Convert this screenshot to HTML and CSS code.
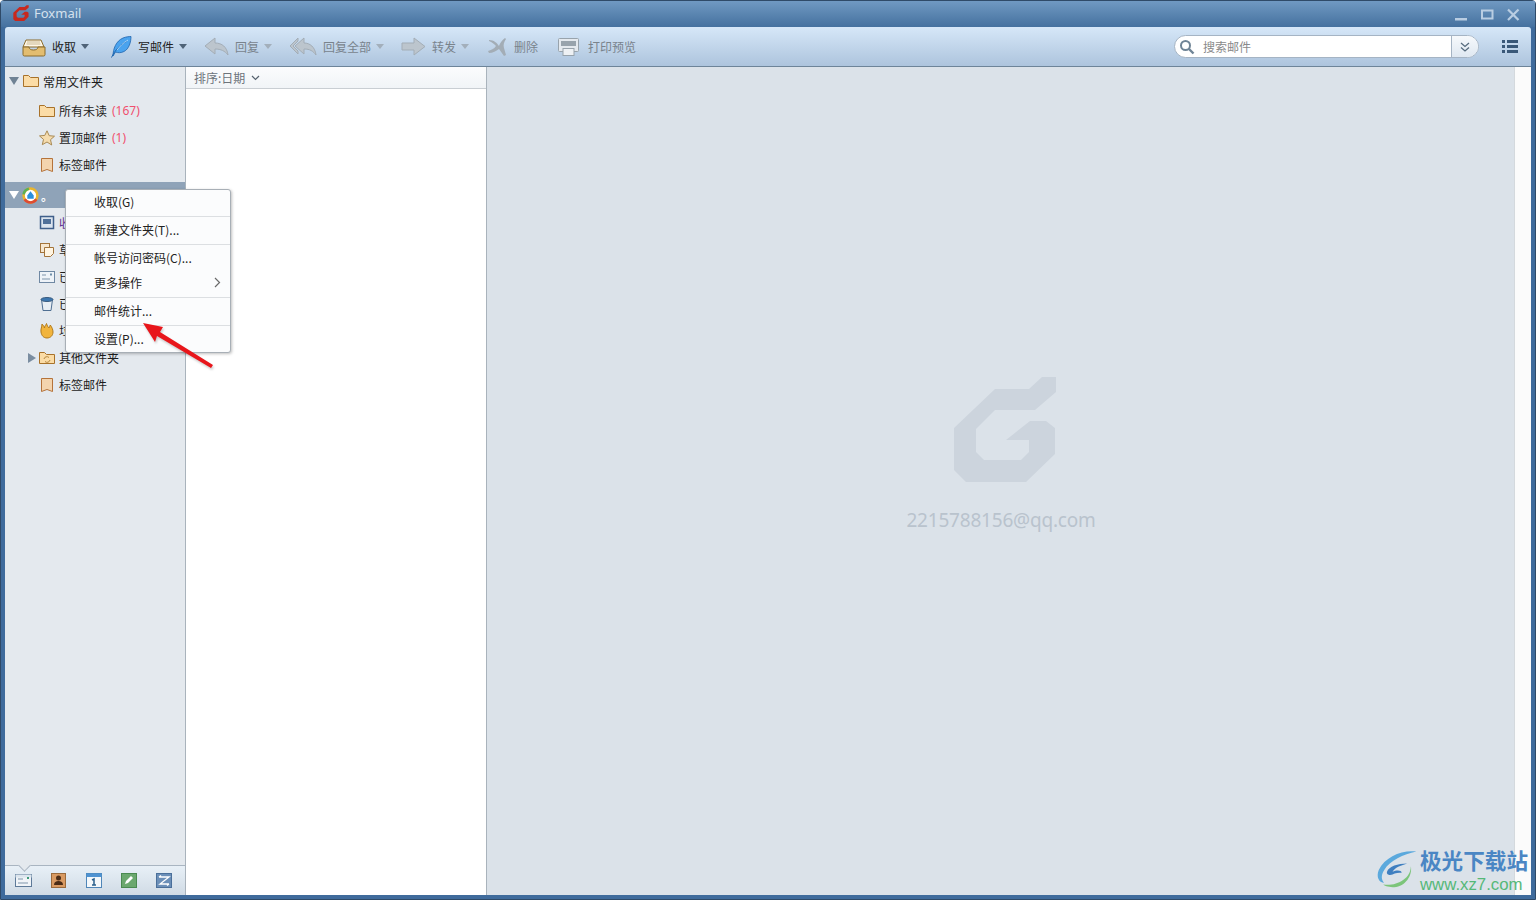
FILE: index.html
```html
<!DOCTYPE html>
<html lang="zh-CN">
<head>
  <meta charset="UTF-8">
  <title>Foxmail</title>
  <link rel="stylesheet" href="styles.css">
</head>
<body>
  <div class="window">
    <div class="titlebar">
      <svg class="app-logo" width="16" height="16" viewBox="0 0 102 106"><use href="#g-mark" fill="#c8281e"/></svg>
      <span class="app-name">Foxmail</span>
      <div class="win-buttons">
        <svg width="14" height="14" viewBox="0 0 14 14"><rect x="1" y="10" width="12" height="2.500" fill="#b9cde2"/></svg>
        <svg width="14" height="14" viewBox="0 0 14 14"><rect x="2" y="2.500" width="10.500" height="8" fill="none" stroke="#b9cde2" stroke-width="2"/></svg>
        <svg width="14" height="14" viewBox="0 0 14 14"><path d="M2 1.500 12.500 12M12.500 1.500 2 12" stroke="#b9cde2" stroke-width="2.200"/></svg>
      </div>
    </div>

    <div class="client">
      <div class="toolbar">
        <div class="tool tool-first">
          <svg width="24" height="20" viewBox="0 0 24 20"><path d="M4 3h15l3 7H1Z" fill="#fff7e6" stroke="#8a6a2a"/><path d="M5 5h13M4.500 7h14" stroke="#c9b994"/><path d="M1 10h6c0 2 2 3 4.500 3S16 12 16 10h7v7.500a1.500 1.500 0 0 1-1.500 1.500h-19A1.500 1.500 0 0 1 1 17.500Z" fill="#e3bd70" stroke="#8a6a2a"/></svg>
          <span class="tool-label">收取</span><i class="caret"></i>
        </div>
        <div class="tool">
          <svg width="22" height="22" viewBox="0 0 22 22"><path d="M3 20C3 13 6 5 13 2c3-1.200 6-1.500 8-1.500C21 6 19 13 14 15.500c-3 1.500-6 1.500-8.500 .5Z" fill="#4aa3ee" stroke="#1f65ad" stroke-width=".8"/><path d="M1.500 21.500C5 14 10 9 17 5" stroke="#1f65ad" fill="none"/><path d="M7 14C10 10 13 7 18 4" stroke="#a8d6fb" fill="none"/></svg>
          <span class="tool-label">写邮件</span><i class="caret"></i>
        </div>
        <div class="tool off">
          <svg width="25" height="20" viewBox="0 0 25 20"><path d="M1 9 11 1v5c7 0 12 4 13 12-3-4-7-6-13-6v5Z" fill="#bcc5cd" stroke="#a3adb6"/></svg>
          <span class="tool-label">回复</span><i class="caret"></i>
        </div>
        <div class="tool off">
          <svg width="28" height="20" viewBox="0 0 28 20"><path d="M1 9 9 1v3L4 9l5 5v3ZM6 9l9-8v5c6 0 11 4 12 12-3-4-6-6-12-6v5Z" fill="#bcc5cd" stroke="#a3adb6"/></svg>
          <span class="tool-label">回复全部</span><i class="caret"></i>
        </div>
        <div class="tool off tool-fwd">
          <svg width="25" height="20" viewBox="0 0 25 20"><path d="M1 6h12V1l11 8.500L13 18v-5H1Z" fill="#bcc5cd" stroke="#a3adb6"/></svg>
          <span class="tool-label">转发</span><i class="caret"></i>
        </div>
        <div class="tool off tool-del">
          <svg width="20" height="20" viewBox="0 0 20 20"><path d="M1 3c5 0 8 3 10 6 1-3 3-6 6-8l1 1c-2 3-3 6-2 9l2 7-2 1-5-7c-3 2-6 4-10 4l-1-2c3-1 6-2 8-5-2-2-4-4-7-5Z" fill="#a3adb6"/></svg>
          <span class="tool-label">删除</span>
        </div>
        <div class="tool off tool-print">
          <svg width="21" height="18" viewBox="0 0 21 18"><rect x=".5" y=".5" width="20" height="13" rx="1" fill="#e4e9ee" stroke="#98a3ac"/><rect x="3" y="3" width="15" height="5" fill="#98a3ac"/><rect x="5" y="10.500" width="11" height="7" fill="#eef1f4" stroke="#98a3ac"/></svg>
          <span class="tool-label">打印预览</span>
        </div>
        <div class="search">
          <svg width="16" height="16" viewBox="0 0 16 16"><circle cx="6.500" cy="6.500" r="4.500" fill="none" stroke="#6f8496" stroke-width="2"/><path d="M10 10l4.500 4.500" stroke="#6f8496" stroke-width="2.400"/></svg>
          <span class="search-text">搜索邮件</span>
          <div class="search-more">
            <svg width="12" height="12" viewBox="0 0 12 12"><path d="M2 2l4 3.500L10 2M2 6.500 6 10l4-3.500" fill="none" stroke="#566b7d" stroke-width="1.300"/></svg>
          </div>
        </div>
        <svg class="list-icon" width="16" height="13" viewBox="0 0 16 13"><path d="M0 0h3v3H0ZM5 0h11v3H5ZM0 5h3v3H0ZM5 5h11v3H5ZM0 10h3v3H0ZM5 10h11v3H5Z" fill="#3a5878"/></svg>
      </div>

      <div class="panes">
        <div class="sidebar">
          <div class="tree">
            <div class="row row-top">
              <i class="tri-down"></i>
              <svg class="icon" width="16" height="14" viewBox="0 0 16 14"><use href="#folder"/></svg>
              <span>常用文件夹</span>
            </div>
            <div class="row row-sub">
              <svg class="icon" width="16" height="14" viewBox="0 0 16 14"><use href="#folder"/></svg>
              <span>所有未读</span><span class="count">(167)</span>
            </div>
            <div class="row row-sub">
              <svg class="icon" width="16" height="16" viewBox="0 0 16 16"><path d="M8 .8l2.200 4.900 5.300 .5-4 3.500 1.200 5.300L8 12l-4.700 2.700 1.200-5.300-4-3.500 5.300-.5Z" fill="#f5dcae" stroke="#a98a54"/></svg>
              <span>置顶邮件</span><span class="count">(1)</span>
            </div>
            <div class="row row-sub">
              <svg class="icon" width="16" height="16" viewBox="0 0 16 16"><use href="#tag"/></svg>
              <span>标签邮件</span>
            </div>
            <div class="row row-account">
              <i class="tri-down tri-white"></i>
              <svg class="icon" width="17" height="17" viewBox="0 0 16 16"><circle cx="8" cy="8" r="6.500" fill="#fff" stroke="#e9b52e" stroke-width="2.400"/><path d="M2.500 11.500a6.500 6.500 0 0 0 11 0" fill="none" stroke="#de4b32" stroke-width="2.400"/><path d="M1.500 7a6.500 6.500 0 0 1 5-5.400" fill="none" stroke="#5cb054" stroke-width="2.400"/><path d="M8 4 11 8v3H5V8Z" fill="#2a8fdc"/></svg>
              <span class="acct-name">。</span>
            </div>
            <div class="row row-sub">
              <svg class="icon" width="16" height="16" viewBox="0 0 16 16"><rect x="1.500" y="1.500" width="13" height="12" fill="#dbe4ee" stroke="#3f5f8a" stroke-width="1.500"/><rect x="4" y="4" width="8" height="5" fill="#4f7099"/></svg>
              <span class="inbox-text">收</span>
            </div>
            <div class="row row-sub">
              <svg class="icon" width="16" height="16" viewBox="0 0 16 16"><rect x="1.500" y="1.500" width="9" height="9" fill="#f6e7cf" stroke="#a3743a"/><path d="M5.500 5.500h9v6l-3 3h-6Z" fill="#fff5e2" stroke="#a3743a"/></svg>
              <span>草</span>
            </div>
            <div class="row row-sub">
              <svg class="icon" width="16" height="14" viewBox="0 0 16 14"><rect x=".5" y="1.500" width="15" height="11" fill="#eef3f8" stroke="#6f88a3"/><path d="M3 9h8M3 5h4" stroke="#7f95ab"/><rect x="11" y="3.500" width="2" height="2" fill="#6f8fa8"/></svg>
              <span>已</span>
            </div>
            <div class="row row-sub">
              <svg class="icon" width="16" height="16" viewBox="0 0 16 16"><path d="M2.500 3.500 4 14.500h8l1.500-11Z" fill="#e8eef4" stroke="#4f6f92"/><ellipse cx="8" cy="3.500" rx="6" ry="2" fill="#3e78b0" stroke="#3c5d80"/></svg>
              <span>已</span>
            </div>
            <div class="row row-sub">
              <svg class="icon" width="16" height="16" viewBox="0 0 16 16"><path d="M2 9C1.500 6 3 4 3 1c1 1 2 2 2.500 4C5.500 3 7 2 7.500 .5c.5 2 1.500 3.500 2.500 4.500 .3-1 1-2 1.300-3 1.500 2 2.700 4.500 2.700 7 0 3.500-2.500 6-6 6S2.500 12.500 2 9Z" fill="#f1b43c" stroke="#b17a1c"/></svg>
              <span>垃</span>
            </div>
            <div class="row row-sub row-other">
              <i class="tri-right"></i>
              <svg class="icon" width="16" height="14" viewBox="0 0 16 14"><use href="#folder"/><path d="M5 8a3 3 0 0 1 5-1.500M11 9a3 3 0 0 1-5 1.500" fill="none" stroke="#b5873f"/></svg>
              <span>其他文件夹</span>
            </div>
            <div class="row row-sub">
              <svg class="icon" width="16" height="16" viewBox="0 0 16 16"><use href="#tag"/></svg>
              <span>标签邮件</span>
            </div>
          </div>
          <div class="dock">
            <svg width="17" height="13" viewBox="0 0 17 13"><rect x=".5" y=".5" width="16" height="12" fill="#f0f4f8" stroke="#5e7a99"/><rect x=".5" y=".5" width="16" height="3" fill="#dce5ee"/><path d="M3 5h5M3 9h10" stroke="#7f95ab"/><rect x="12" y="3" width="2" height="2" fill="#3e9a78"/></svg>
            <svg width="16" height="15" viewBox="0 0 16 15"><rect x=".5" y=".5" width="14" height="14" fill="#d99a62" stroke="#9a6a3c"/><circle cx="7.500" cy="5" r="2.500" fill="#4b2c16"/><path d="M3 12c0-3 2-4 4.500-4S12 9 12 12Z" fill="#4b2c16"/></svg>
            <svg width="16" height="15" viewBox="0 0 16 15"><rect x=".5" y=".5" width="15" height="14" fill="#f4f8fb" stroke="#4f86b8"/><rect x=".5" y=".5" width="15" height="3.500" fill="#4f93d2"/><path d="M6 7l2-1v6M6 12h4" stroke="#2a5f8c" stroke-width="1.500" fill="none"/></svg>
            <svg width="16" height="15" viewBox="0 0 16 15"><rect x=".5" y=".5" width="15" height="14" fill="#6ba86e" stroke="#4a8a50"/><path d="M4 11l1-3 5-5 2 2-5 5Z" fill="#fff"/></svg>
            <svg width="16" height="15" viewBox="0 0 16 15"><rect x=".5" y=".5" width="15" height="14" fill="#6b8fb8" stroke="#4a6f9a"/><path d="M3 4h10L4 11h9M3 4l2-1.500M13 11l-2 1.500" stroke="#fff" fill="none" stroke-width="1.300"/></svg>
          </div>
        </div>

        <div class="list-pane">
          <div class="sort-bar">
            <span>排序:日期</span>
            <svg width="9" height="6" viewBox="0 0 9 6"><path d="M1 1l3.500 3.500L8 1" fill="none" stroke="#56626e" stroke-width="1.200"/></svg>
          </div>
        </div>

        <div class="reading-pane">
          <svg class="big-mark" width="102" height="106" viewBox="0 0 102 106"><use href="#g-mark" fill="#ccd4dd"/></svg>
          <div class="account-mail">2215788156@qq.com</div>
        </div>
        <div class="right-strip"></div>
      </div>
    </div>

    <div class="context-menu">
      <div class="menu-group"><div class="menu-item raise">收取(G)</div></div>
      <div class="menu-group"><div class="menu-item tall">新建文件夹(T)...</div></div>
      <div class="menu-group">
        <div class="menu-item">帐号访问密码(C)...</div>
        <div class="menu-item raise">更多操作
          <svg width="7" height="11" viewBox="0 0 7 11"><path d="M1 1l4.500 4.500L1 10" fill="none" stroke="#6a6a6a" stroke-width="1.200"/></svg>
        </div>
      </div>
      <div class="menu-group"><div class="menu-item tall">邮件统计...</div></div>
      <div class="menu-group"><div class="menu-item">设置(P)...</div></div>
    </div>

    <svg class="red-arrow" width="74" height="48" viewBox="0 0 74 48"><path d="M1 1 21 5 18 10 71 43 69 46 15 14 13 20Z" fill="#e8161b"/></svg>

    <div class="watermark">
      <svg width="44" height="42" viewBox="0 0 48 42"><path d="M44 2C28 0 10 8 3 22c-3 7 0 14 6 14-3-3-4-8 0-14C15 12 30 5 44 2Z" fill="#5ba9dd"/><path d="M12 24c2-6 12-9 22-9-6 2-13 4-16 9 4-2 10-2 10 1-3 0-7 0-10 2-2 1-7 1-6-3Z" fill="#3f7fc0"/><path d="M8 38c14 2 30-6 30-20 2 10-6 22-18 23-5 0-10-1-12-3Z" fill="#7cc57a"/></svg>
      <div class="wm-text">
        <div class="wm-cn">极光下载站</div>
        <div class="wm-url">www.xz7.com</div>
      </div>
    </div>
  </div>

  <svg class="defs" width="0" height="0">
    <defs>
      <path id="g-mark" d="M41 13H75L88 1H102V16L81 34H41L22 53V76L30 84H67L75 76V64H52L76 45H92L101 52V78L72 106H12L0 94V52Z"/>
      <g id="folder"><path d="M.5 12.500V1.500h5l2 2h8v9Z" fill="#fbdca6" stroke="#a8722a"/></g>
      <g id="tag"><path d="M2.500 1.500h11v13l-5.500-2-5.500 2Z" fill="#f3d4ae" stroke="#b5733a"/></g>
    </defs>
  </svg>
</body>
</html>
```

FILE: styles.css
```css
* {
  box-sizing: border-box;
}
html, body {
  margin: 0;
  height: 100%;
  overflow: hidden;
}
body {
  font-family: "Noto Sans CJK SC", "Liberation Sans", sans-serif;
  font-size: 12px;
  color: #1c1c1c;
}
.defs {
  position: absolute;
}
.window {
  position: relative;
  width: 1536px;
  height: 900px;
  display: flex;
  flex-direction: column;
  background: #3f6b9c;
  border: 1px solid #2f4a68;
  border-radius: 4px 4px 0 0;
  padding: 0 4px 4px 3px;
}
.titlebar {
  height: 26px;
  margin: 0 -4px 0 -3px;
  padding: 0 15px 2px 12px;
  display: flex;
  align-items: center;
  background: linear-gradient(#7099c2, #45719f);
}
.app-logo {
  margin-right: 5px;
}
.app-name {
  font-family: "Noto Sans", sans-serif;
  font-size: 13px;
  color: #d5e1ee;
}
.win-buttons {
  margin-left: auto;
  display: flex;
  gap: 12px;
  margin-top: 4px;
}
.client {
  flex: 1;
  min-height: 0;
  display: flex;
  flex-direction: column;
  margin-left: 1px;
}
.toolbar {
  height: 40px;
  padding: 0 13px 0 6px;
  display: flex;
  align-items: center;
  background: linear-gradient(#d6e7f8, #adc4dd);
  border-bottom: 1px solid #6d8499;
  border-radius: 3px 3px 0 0;
}
.tool {
  display: flex;
  align-items: center;
  gap: 6px;
  margin-right: 17px;
}
.tool-first {
  margin-left: 11px;
  margin-right: 21px;
}
.tool-fwd {
  margin-right: 19px;
}
.tool-del {
  margin-right: 20px;
}
.tool-print {
  gap: 9px;
}
.tool-label {
  color: #222;
}
.off .tool-label {
  color: #79838c;
}
.caret {
  width: 0;
  height: 0;
  margin-left: -1px;
  border-left: 4px solid transparent;
  border-right: 4px solid transparent;
  border-top: 5px solid #4f6378;
}
.off .caret {
  border-top-color: #a3afbb;
}
.search {
  margin-left: auto;
  width: 305px;
  height: 23px;
  display: flex;
  align-items: center;
  padding-left: 4px;
  background: #fff;
  border: 1px solid #a5b4c4;
  border-radius: 12px;
  overflow: hidden;
}
.search-text {
  margin-left: 8px;
  color: #8a8a8a;
}
.search-more {
  margin-left: auto;
  width: 27px;
  height: 100%;
  display: flex;
  align-items: center;
  justify-content: center;
  background: linear-gradient(#f6f9fc, #dfe8f1);
  border-left: 1px solid #a5b4c4;
}
.list-icon {
  margin-left: 23px;
}
.panes {
  flex: 1;
  min-height: 0;
  display: flex;
}
.sidebar {
  width: 181px;
  display: flex;
  flex-direction: column;
  background: #e4e9ee;
  border-right: 1px solid #a9b3bc;
}
.tree {
  flex: 1;
}
.row {
  height: 27px;
  display: flex;
  align-items: center;
  white-space: nowrap;
}
.row-top {
  height: 30px;
  padding: 0 0 2px 4px;
}
.row-sub {
  padding-left: 34px;
}
.row-account {
  height: 26px;
  margin-top: 4px;
  margin-bottom: 1px;
  padding-left: 4px;
  background: #8fa3b8;
}
.row-other {
  padding-left: 23px;
}
.icon {
  flex: none;
  margin-right: 4px;
}
.row-top .icon, .row-account .icon {
  margin-left: 3px;
}
.row-top .icon {
  margin-left: 4px;
}
.tri-down {
  flex: none;
  width: 0;
  height: 0;
  border-left: 5px solid transparent;
  border-right: 5px solid transparent;
  border-top: 8px solid #6f8294;
}
.tri-white {
  border-top-color: #fff;
}
.tri-right {
  flex: none;
  width: 0;
  height: 0;
  margin-right: 3px;
  border-top: 5px solid transparent;
  border-bottom: 5px solid transparent;
  border-left: 8px solid #7a8da0;
}
.acct-name {
  color: #fff;
  margin-left: -2px;
  font-weight: 700;
}
.count {
  margin-left: 5px;
  color: #f0506e;
  font-family: "Noto Sans", sans-serif;
}
.inbox-text {
  color: #5a2a8c;
}
.dock {
  height: 30px;
  display: flex;
  align-items: center;
  gap: 19px;
  padding: 0 0 0 10px;
  background: linear-gradient(#e8f0f7, #d0dbe5);
  border-top: 1px solid #a9b5c1;
  position: relative;
}
.dock::before {
  content: "";
  position: absolute;
  left: 15px;
  top: -1px;
  width: 8px;
  height: 8px;
  border-right: 1px solid #a9b5c1;
  border-bottom: 1px solid #a9b5c1;
  background: #e4e9ee;
  transform: translateY(-4px) rotate(45deg);
}
.list-pane {
  width: 301px;
  background: #fff;
  border-right: 1px solid #a9b3bc;
}
.sort-bar {
  height: 22px;
  padding-left: 8px;
  display: flex;
  align-items: center;
  gap: 6px;
  color: #6d747b;
  background: linear-gradient(#fbfcfd, #f1f4f7);
  border-bottom: 1px solid #c9ced3;
}
.reading-pane {
  flex: 1;
  display: flex;
  flex-direction: column;
  align-items: center;
  padding-top: 309px;
  background: #dbe2e9;
}
.big-mark {
  margin-left: 9px;
}
.account-mail {
  margin-top: 25px;
  margin-left: 1px;
  font-family: "Noto Sans", sans-serif;
  font-size: 19px;
  letter-spacing: -0.2px;
  color: #b9c3cd;
}
.right-strip {
  width: 17px;
  background: #fbfbfb;
  border-left: 1px solid #d4d9dd;
}
.context-menu {
  position: absolute;
  left: 64px;
  top: 188px;
  width: 166px;
  background: #fbfcfd;
  border: 1px solid #a8afb6;
  border-radius: 3px;
  box-shadow: 1px 1px 3px rgba(0,0,0,0.25);
}
.menu-group {
  border-bottom: 1px solid #dcdfe2;
}
.menu-group:last-child {
  border-bottom: none;
}
.menu-item {
  height: 26px;
  padding: 0 9px 2px 28px;
  display: flex;
  align-items: center;
  justify-content: space-between;
  color: #222;
}
.raise {
  padding-bottom: 4px;
}
.tall {
  height: 27px;
  padding-bottom: 3px;
}
.red-arrow {
  position: absolute;
  left: 141px;
  top: 321px;
  filter: drop-shadow(1px 2px 1px rgba(0,0,0,0.2));
}
.watermark {
  position: absolute;
  left: 1375px;
  top: 847px;
  display: flex;
}
.wm-cn {
  font-size: 21.600px;
  font-weight: 700;
  line-height: 24px;
  color: #4a86c4;
}
.wm-url {
  margin-top: 2px;
  font-family: "Liberation Sans", sans-serif;
  font-size: 16.800px;
  line-height: 22px;
  color: #55b878;
}
```
